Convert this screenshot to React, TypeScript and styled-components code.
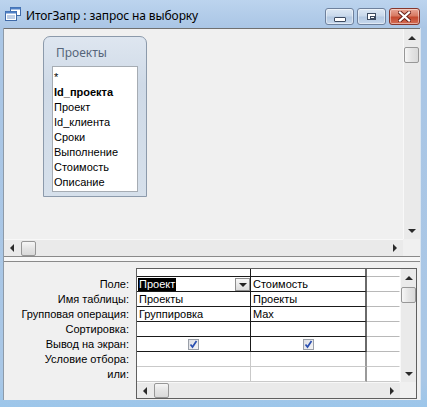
import React from 'react';
import styled, { createGlobalStyle, css } from 'styled-components';

const GlobalStyle = createGlobalStyle`
  html, body { margin: 0; padding: 0; }
  body { width: 427px; height: 407px; overflow: hidden; background: #a9c6e5; }
`;

const Window = styled.div`
  width: 427px;
  height: 407px;
  display: flex;
  flex-direction: column;
  background: linear-gradient(to bottom, #bcd4ee 0, #aac6e5 28px, #a9c7e6 380px, #9cc6ea 100%);
  font-family: 'Liberation Sans', Arial, sans-serif;
  font-size: 11px;
  color: #000;
`;

const TitleBar = styled.div`
  height: 28px;
  flex: none;
  display: flex;
  align-items: center;
  padding: 0 7px 0 5px;
  gap: 5px;
`;

const Title = styled.div`
  flex: 1;
  font-family: 'Noto Sans', 'Open Sans', sans-serif;
  font-size: 12px;
  padding-top: 2px;
  color: #000;
  letter-spacing: -0.1px;
`;

const CapButtons = styled.div`
  display: flex;
  gap: 3px;
  align-self: flex-start;
  margin-top: 8px;
`;

const CapBtn = styled.div<{ $close?: boolean }>`
  width: ${p => (p.$close ? 31 : 29)}px;
  height: 17px;
  box-sizing: border-box;
  border: 1px solid ${p => (p.$close ? '#86362c' : '#6e819d')};
  border-radius: 3px;
  display: flex;
  align-items: center;
  justify-content: center;
  box-shadow: inset 0 0 0 1px rgba(255, 255, 255, 0.45);
  background: ${p =>
    p.$close
      ? 'linear-gradient(#e9a797, #d77a63 45%, #c4492f 55%, #d46e55)'
      : 'linear-gradient(#dde8f4, #c9d9eb 45%, #b4c9e2 55%, #c7d8ec)'};
`;

const MinGlyph = styled.div`
  width: 10px;
  height: 3px;
  margin-top: 5px;
  background: #fff;
  border: 1px solid #3d4b60;
  border-radius: 1px;
`;

const MaxGlyph = styled.div`
  width: 9px;
  height: 7px;
  box-sizing: border-box;
  border: 1px solid #3d4b60;
  background: #fff;
  box-shadow: inset 0 0 0 1px #fff;
  position: relative;
  &::after {
    content: '';
    position: absolute;
    left: 2px;
    top: 2px;
    width: 3px;
    height: 1px;
    border: 1px solid #3d4b60;
  }
`;

const Body = styled.div`
  flex: 1;
  margin: 0 6px 7px 3px;
  display: flex;
  flex-direction: column;
  border-left: 1px solid #8d9aa8;
  border-right: 1px solid #d8e4f0;
  background: #f0f0f0;
`;

const UpperPane = styled.div`
  height: 228px;
  flex: none;
  display: grid;
  grid-template-columns: 1fr 17px;
  grid-template-rows: 1fr 17px;
  border-top: 1px solid #707070;
  box-sizing: border-box;
`;

const Canvas = styled.div`
  background: #f0f0f0;
  overflow: hidden;
`;

const TableBox = styled.div`
  width: 104px;
  height: 161px;
  box-sizing: border-box;
  margin: 7px 0 0 39px;
  border: 1px solid #8c9aab;
  border-radius: 7px 7px 0 0;
  background: linear-gradient(#dee6f0, #cfdae7 30%, #d6e0eb);
  padding: 0 8px 0 8px;
  display: flex;
  flex-direction: column;
`;

const TableTitle = styled.div`
  height: 29px;
  display: flex;
  align-items: center;
  padding-left: 4px;
  padding-top: 1px;
  box-sizing: border-box;
  font-family: 'Noto Sans', 'Open Sans', sans-serif;
  font-size: 12px;
  color: #56657a;
`;

const FieldList = styled.div`
  height: 126px;
  box-sizing: border-box;
  background: #fff;
  border: 1px solid #a6acb3;
  padding: 3px 0 0 1px;
`;

const FieldItem = styled.div<{ $key?: boolean }>`
  height: 15px;
  line-height: 15px;
  font-weight: ${p => (p.$key ? 700 : 400)};
  white-space: nowrap;
`;

const Splitter = styled.div`
  height: 6px;
  flex: none;
  box-sizing: border-box;
  margin-top: 0;
  border-top: 1px solid #8a8a8a;
  border-bottom: 1px solid #8a8a8a;
  background: #f7f7f7;
`;

const LowerPane = styled.div`
  flex: 1;
  display: flex;
  padding: 6px 3px 1px 0;
  background: #f0f0f0;
`;

const Labels = styled.div`
  width: 132px;
  flex: none;
  box-sizing: border-box;
  padding: 9px 7px 0 0;
  text-align: right;
`;

const Label = styled.div`
  height: 15px;
  line-height: 15px;
  white-space: nowrap;
`;

const GridFrame = styled.div`
  width: 281px;
  height: 131px;
  box-sizing: border-box;
  border: 1px solid #5f5f5f;
  display: grid;
  grid-template-columns: 1fr 16px;
  grid-template-rows: 1fr 16px;
`;

const Grid = styled.div`
  display: grid;
  grid-template-columns: 114px 116px 33px;
  grid-template-rows: 8px repeat(7, 15px);
  background: #fff;
  overflow: hidden;
`;

const Cell = styled.div<{ $bottom: string; $right: string; $rightW?: number; $center?: boolean }>`
  box-sizing: border-box;
  border-bottom: 1px solid ${p => p.$bottom};
  border-right: ${p => p.$rightW ?? 1}px solid ${p => p.$right};
  padding-left: 2px;
  line-height: 14px;
  white-space: nowrap;
  overflow: hidden;
  display: flex;
  align-items: center;
  ${p =>
    p.$center &&
    css`
      justify-content: center;
      padding-left: 0;
    `}
`;

const Selected = styled.span`
  background: #000;
  color: #fff;
  height: 13px;
  line-height: 13px;
  padding: 0 1px 0 1px;
  margin-left: -1px;
`;

const DropBtn = styled.div`
  margin-left: auto;
  width: 15px;
  height: 13px;
  box-sizing: border-box;
  border: 1px solid #8e8e8e;
  background: linear-gradient(#f7f7f7, #dcdcdc);
  display: flex;
  align-items: flex-end;
  justify-content: center;
  padding-bottom: 3px;
`;

const CheckBox = styled.div`
  width: 11px;
  height: 11px;
  box-sizing: border-box;
  border: 1px solid #9a9fa8;
  background: linear-gradient(135deg, #dcdee3, #f4f4f6);
  display: flex;
  align-items: center;
  justify-content: center;
`;

/* scrollbars */

const VBar = styled.div`
  display: flex;
  flex-direction: column;
  background: #eaeaea;
  border-left: 1px solid #f8f8f8;
`;

const HBar = styled.div`
  display: flex;
  align-items: center;
  background: #eaeaea;
  border-top: 1px solid #f8f8f8;
`;

const Corner = styled.div`
  background: #f0f0f0;
`;

const ArrowBox = styled.div<{ $v?: boolean }>`
  flex: none;
  width: ${p => (p.$v ? 'auto' : '16px')};
  height: ${p => (p.$v ? '17px' : '100%')};
  display: flex;
  align-items: center;
  justify-content: center;
`;

const Track = styled.div`
  flex: 1;
  display: flex;
`;

const Tri = styled.span<{ $dir: 'up' | 'down' | 'left' | 'right' }>`
  width: 0;
  height: 0;
  border-style: solid;
  border-color: transparent;
  ${p => {
    switch (p.$dir) {
      case 'up':
        return css`border-width: 0 4px 4px 4px; border-bottom-color: #2a2a2a;`;
      case 'down':
        return css`border-width: 4px 4px 0 4px; border-top-color: #2a2a2a;`;
      case 'left':
        return css`border-width: 4px 4px 4px 0; border-right-color: #2a2a2a;`;
      default:
        return css`border-width: 4px 0 4px 4px; border-left-color: #2a2a2a;`;
    }
  }}
`;

const Thumb = styled.div<{ $v?: boolean }>`
  box-sizing: border-box;
  width: ${p => (p.$v ? '15px' : '15px')};
  height: ${p => (p.$v ? '16px' : '15px')};
  margin: ${p => (p.$v ? '1px 0 0 0' : '0 0 0 1px')};
  border: 1px solid #979797;
  border-radius: 2px;
  background: ${p =>
    p.$v ? 'linear-gradient(to right, #f6f6f6, #e4e4e4 50%, #d9d9d9)' : 'linear-gradient(#f6f6f6, #e4e4e4 50%, #d9d9d9)'};
`;

const VScroll: React.FC = () => (
  <VBar>
    <ArrowBox $v>
      <Tri $dir="up" />
    </ArrowBox>
    <Track style={{ flexDirection: 'column' }}>
      <Thumb $v />
    </Track>
    <ArrowBox $v>
      <Tri $dir="down" />
    </ArrowBox>
  </VBar>
);

const HScroll: React.FC = () => (
  <HBar>
    <ArrowBox>
      <Tri $dir="left" />
    </ArrowBox>
    <Track>
      <Thumb />
    </Track>
    <ArrowBox>
      <Tri $dir="right" />
    </ArrowBox>
  </HBar>
);

const QueryIcon = () => (
  <svg width="16" height="14" viewBox="0 0 16 14">
    <rect x="5.5" y="0.5" width="10" height="8" fill="#fff" stroke="#3f6aa8" />
    <rect x="5.5" y="0.5" width="10" height="2" fill="#4f80c6" />
    <rect x="0.5" y="4.5" width="11" height="9" fill="#fff" stroke="#3f6aa8" />
    <rect x="0.5" y="4.5" width="11" height="2" fill="#4f80c6" />
    <line x1="2" y1="9" x2="10" y2="9" stroke="#7c9dcc" />
    <line x1="2" y1="11" x2="10" y2="11" stroke="#7c9dcc" />
  </svg>
);

const CloseGlyph = () => (
  <svg width="13" height="11" viewBox="0 0 13 11">
    <path d="M2 1.5 L11 9.5 M11 1.5 L2 9.5" stroke="#6a2018" strokeWidth="4" strokeLinecap="square" />
    <path d="M2 1.5 L11 9.5 M11 1.5 L2 9.5" stroke="#fff" strokeWidth="2.2" strokeLinecap="square" />
  </svg>
);

const CheckMark = () => (
  <svg width="9" height="9" viewBox="0 0 9 9">
    <path d="M1.5 4.5 L3.5 7 L7.5 1" fill="none" stroke="#2a4fb0" strokeWidth="1.7" />
  </svg>
);

const DownTri = styled.span`
  width: 0;
  height: 0;
  border-style: solid;
  border-width: 4px 4px 0 4px;
  border-color: #222 transparent transparent transparent;
`;

const fields = ['*', 'Id_проекта', 'Проект', 'Id_клиента', 'Сроки', 'Выполнение', 'Стоимость', 'Описание'];

type Row = { label: string; c1?: string; c2?: string; kind?: 'field' | 'check'; faint?: boolean };

const rows: Row[] = [
  { label: 'Поле:', c1: 'Проект', c2: 'Стоимость', kind: 'field' },
  { label: 'Имя таблицы:', c1: 'Проекты', c2: 'Проекты' },
  { label: 'Групповая операция:', c1: 'Группировка', c2: 'Max' },
  { label: 'Сортировка:' },
  { label: 'Вывод на экран:', kind: 'check' },
  { label: 'Условие отбора:', faint: true },
  { label: 'или:', faint: true },
];

const DARK = '#1a1a1a';
const FAINT = '#c9c9c9';
const COL3 = '#b8b8b8';

const App: React.FC = () => {
  return (
    <Window>
      <GlobalStyle />
      <TitleBar>
        <QueryIcon />
        <Title>ИтогЗапр : запрос на выборку</Title>
        <CapButtons>
          <CapBtn>
            <MinGlyph />
          </CapBtn>
          <CapBtn>
            <MaxGlyph />
          </CapBtn>
          <CapBtn $close>
            <CloseGlyph />
          </CapBtn>
        </CapButtons>
      </TitleBar>

      <Body>
        <UpperPane>
          <Canvas>
            <TableBox>
              <TableTitle>Проекты</TableTitle>
              <FieldList>
                {fields.map((f, i) => (
                  <FieldItem key={f} $key={i === 1}>
                    {f}
                  </FieldItem>
                ))}
              </FieldList>
            </TableBox>
          </Canvas>
          <VScroll />
          <HScroll />
          <Corner />
        </UpperPane>

        <Splitter />

        <LowerPane>
          <Labels>
            {rows.map(r => (
              <Label key={r.label}>{r.label}</Label>
            ))}
          </Labels>
          <GridFrame>
            <Grid>
              <Cell $bottom={DARK} $right={DARK} />
              <Cell $bottom={DARK} $right="#6a6a6a" $rightW={2} />
              <Cell $bottom={COL3} $right="transparent" />
              {rows.map(r => {
                const bottom = r.faint ? FAINT : DARK;
                const right1 = r.faint ? FAINT : DARK;
                const right2 = r.faint ? '#9a9a9a' : '#6a6a6a';
                return (
                  <React.Fragment key={r.label}>
                    <Cell $bottom={bottom} $right={right1} $center={r.kind === 'check'}>
                      {r.kind === 'field' ? (
                        <>
                          <Selected>{r.c1}</Selected>
                          <DropBtn>
                            <DownTri />
                          </DropBtn>
                        </>
                      ) : r.kind === 'check' ? (
                        <CheckBox>
                          <CheckMark />
                        </CheckBox>
                      ) : (
                        r.c1
                      )}
                    </Cell>
                    <Cell $bottom={bottom} $right={right2} $rightW={2} $center={r.kind === 'check'}>
                      {r.kind === 'check' ? (
                        <CheckBox>
                          <CheckMark />
                        </CheckBox>
                      ) : (
                        r.c2
                      )}
                    </Cell>
                    <Cell $bottom={r.faint ? FAINT : COL3} $right="transparent" />
                  </React.Fragment>
                );
              })}
            </Grid>
            <VScroll />
            <HScroll />
            <Corner />
          </GridFrame>
        </LowerPane>
      </Body>
    </Window>
  );
};

export default App;
